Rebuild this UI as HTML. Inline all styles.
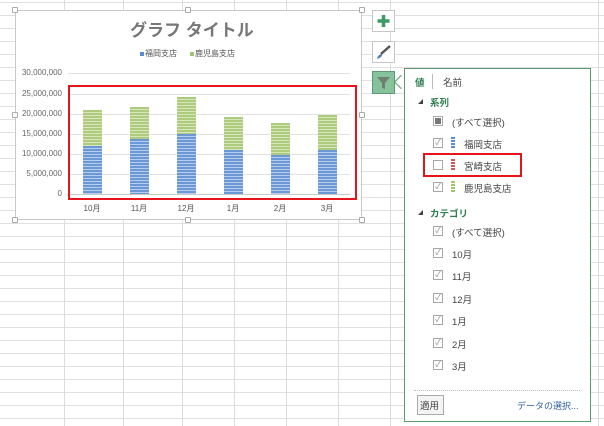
<!DOCTYPE html>
<html><head><meta charset="utf-8"><style>
*{margin:0;padding:0;box-sizing:border-box}
body{width:604px;height:426px;overflow:hidden;position:relative;background:#fff;font-family:"Liberation Sans","Noto Sans CJK JP",sans-serif;color:#444}
.grid{position:absolute;inset:0;background:
repeating-linear-gradient(to bottom,transparent 0,transparent 2px,#e0e0e0 2px,#e0e0e0 3px,transparent 3px,transparent 13px)}
.v{position:absolute;top:0;bottom:0;width:1px;background:#dcdcdc}
.a{position:absolute}
.chart{position:absolute;left:15px;top:10px;width:347px;height:210px;background:#fff;border:1px solid #c8c8c8}
.h{position:absolute;width:6px;height:6px;border:1px solid #aaa;background:#fff;border-radius:1px}
.gl{position:absolute;left:68px;width:282px;height:1px;background:#e2e2e2}
.yl{position:absolute;left:0;width:62px;text-align:right;font-size:8px;color:#666}
.bar{position:absolute;width:19px}
.bl{background:repeating-linear-gradient(to bottom,#6a97d6 0,#6a97d6 2px,#b7cdea 2px,#b7cdea 3px)}
.gr{background:repeating-linear-gradient(to bottom,#aecb7c 0,#aecb7c 2px,#d8e6bf 2px,#d8e6bf 3px)}
.xl{position:absolute;top:203px;font-size:8px;color:#555;width:30px;text-align:center}
.btn{position:absolute;left:372px;width:23px;height:22px;border:1px solid #c6c6c6;background:#fff}
.panel{position:absolute;left:404px;top:68px;width:187px;height:354px;background:#fff;border:1px solid #5a9a6e}
.t{position:absolute;font-size:9.5px;color:#444;white-space:nowrap}
.cb{position:absolute;width:10px;height:10px;border:1px solid #a8a8a8;background:#fff;font-size:8px;line-height:8px;text-align:center;color:#888}
.sec{position:absolute;font-size:9.5px;font-weight:bold;color:#2d7d4f}
.tri{position:absolute;width:0;height:0;border-left:5px solid transparent;border-bottom:5px solid #444}
</style></head><body>
<div class="grid"></div>
<div class="v" style="left:64px"></div><div class="v" style="left:123px"></div><div class="v" style="left:182px"></div><div class="v" style="left:234px"></div><div class="v" style="left:286px"></div><div class="v" style="left:338px"></div><div class="v" style="left:390px"></div><div class="v" style="left:598px"></div>

<div class="chart"></div>
<div class="h" style="left:12px;top:7px"></div><div class="h" style="left:185px;top:7px"></div><div class="h" style="left:359px;top:7px"></div>
<div class="h" style="left:12px;top:112px"></div><div class="h" style="left:359px;top:112px"></div>
<div class="h" style="left:12px;top:217px"></div><div class="h" style="left:185px;top:217px"></div><div class="h" style="left:359px;top:217px"></div>

<div class="t" style="left:130px;top:16px;font-size:17px;font-weight:bold;color:#777">グラフ タイトル</div>
<div class="a" style="left:140px;top:52px;width:4px;height:4px;background:#5b8bd0"></div>
<div class="t" style="left:145px;top:48px;font-size:8px;color:#555">福岡支店</div>
<div class="a" style="left:190px;top:52px;width:4px;height:4px;background:#a2c46a"></div>
<div class="t" style="left:195px;top:48px;font-size:8px;color:#555">鹿児島支店</div>

<div class="gl" style="top:73px"></div><div class="gl" style="top:94px"></div><div class="gl" style="top:114px"></div><div class="gl" style="top:134px"></div><div class="gl" style="top:154px"></div><div class="gl" style="top:174px"></div>
<div class="gl" style="top:194px;background:#c8c8c8"></div>
<div class="yl" style="top:68px">30,000,000</div><div class="yl" style="top:89px">25,000,000</div><div class="yl" style="top:109px">20,000,000</div><div class="yl" style="top:129px">15,000,000</div><div class="yl" style="top:149px">10,000,000</div><div class="yl" style="top:169px">5,000,000</div><div class="yl" style="top:189px">0</div>

<div class="bar gr" style="left:83px;top:110px;height:36px"></div><div class="bar bl" style="left:83px;top:146px;height:48px"></div>
<div class="bar gr" style="left:130px;top:107px;height:32px"></div><div class="bar bl" style="left:130px;top:139px;height:55px"></div>
<div class="bar gr" style="left:177px;top:97px;height:37px"></div><div class="bar bl" style="left:177px;top:134px;height:60px"></div>
<div class="bar gr" style="left:224px;top:117px;height:33px"></div><div class="bar bl" style="left:224px;top:150px;height:44px"></div>
<div class="bar gr" style="left:271px;top:123px;height:32px"></div><div class="bar bl" style="left:271px;top:155px;height:39px"></div>
<div class="bar gr" style="left:318px;top:115px;height:35px"></div><div class="bar bl" style="left:318px;top:150px;height:44px"></div>

<div class="xl" style="left:77px">10月</div><div class="xl" style="left:124px">11月</div><div class="xl" style="left:171px">12月</div><div class="xl" style="left:218px">1月</div><div class="xl" style="left:265px">2月</div><div class="xl" style="left:312px">3月</div>

<div class="a" style="left:68px;top:85px;width:289px;height:115px;border:2px solid #e8141c"></div>

<div class="btn" style="top:10px"><svg width="21" height="20"><path d="M10.5 4v12M4.5 10h12" stroke="#3c9a64" stroke-width="3.5"/></svg></div>
<div class="btn" style="top:41px"><svg width="21" height="20"><path d="M8 12 L17 4" stroke="#555" stroke-width="2.5"/><path d="M4 17 Q5 12 9 12 Q10 15 4 17Z" fill="#4a7fc6"/></svg></div>
<div class="btn" style="top:71px;height:23px;background:#86c39c;border-color:#5a9a6e"><svg width="21" height="21"><path d="M4 5h13l-5 6v6l-3-1v-5z" fill="#6f7f74"/></svg></div>
<div class="a" style="left:396px;top:77px;width:10px;height:10px;background:#fff;border-left:1px solid #5a9a6e;border-bottom:1px solid #5a9a6e;transform:rotate(45deg)"></div>

<div class="panel"></div>
<div class="t" style="left:415px;top:75px;color:#2d7d4f;font-weight:bold">値</div>
<div class="a" style="left:432px;top:74px;width:1px;height:15px;background:#bbb"></div>
<div class="t" style="left:443px;top:75px">名前</div>

<div class="tri" style="left:418px;top:99px"></div><div class="sec" style="left:430px;top:95px">系列</div>
<div class="cb" style="left:433px;top:116px"><div style="width:6px;height:6px;background:#777;margin:1px"></div></div><div class="t" style="left:452px;top:115px">(すべて選択)</div>
<div class="cb" style="left:433px;top:138px">✓</div><div class="a" style="left:451px;top:137px;width:4px;height:11px;background:repeating-linear-gradient(#5b8bd0 0 2px,#fff 2px 3px)"></div><div class="t" style="left:464px;top:137px">福岡支店</div>
<div class="cb" style="left:433px;top:160px"></div><div class="a" style="left:451px;top:159px;width:4px;height:11px;background:repeating-linear-gradient(#d0585b 0 2px,#fff 2px 3px)"></div><div class="t" style="left:464px;top:159px">宮崎支店</div>
<div class="a" style="left:423px;top:153px;width:99px;height:24px;border:2px solid #e8141c"></div>
<div class="cb" style="left:433px;top:182px">✓</div><div class="a" style="left:451px;top:181px;width:4px;height:11px;background:repeating-linear-gradient(#a2c46a 0 2px,#fff 2px 3px)"></div><div class="t" style="left:464px;top:181px">鹿児島支店</div>

<div class="tri" style="left:418px;top:210px"></div><div class="sec" style="left:430px;top:206px">カテゴリ</div>
<div class="cb" style="left:433px;top:226px">✓</div><div class="t" style="left:452px;top:225px">(すべて選択)</div>
<div class="cb" style="left:433px;top:248px">✓</div><div class="t" style="left:452px;top:247px">10月</div>
<div class="cb" style="left:433px;top:270px">✓</div><div class="t" style="left:452px;top:269px">11月</div>
<div class="cb" style="left:433px;top:293px">✓</div><div class="t" style="left:452px;top:292px">12月</div>
<div class="cb" style="left:433px;top:315px">✓</div><div class="t" style="left:452px;top:314px">1月</div>
<div class="cb" style="left:433px;top:338px">✓</div><div class="t" style="left:452px;top:337px">2月</div>
<div class="cb" style="left:433px;top:360px">✓</div><div class="t" style="left:452px;top:359px">3月</div>

<div class="a" style="left:414px;top:390px;width:166px;border-top:1px dotted #bbb"></div>
<div class="a" style="left:417px;top:395px;width:27px;height:20px;border:1px solid #aaa;background:#f4f4f4"></div>
<div class="t" style="left:420px;top:398px">適用</div>
<div class="t" style="left:517px;top:399px;color:#2e5fa0;font-size:9px">データの選択...</div>
</body></html>
